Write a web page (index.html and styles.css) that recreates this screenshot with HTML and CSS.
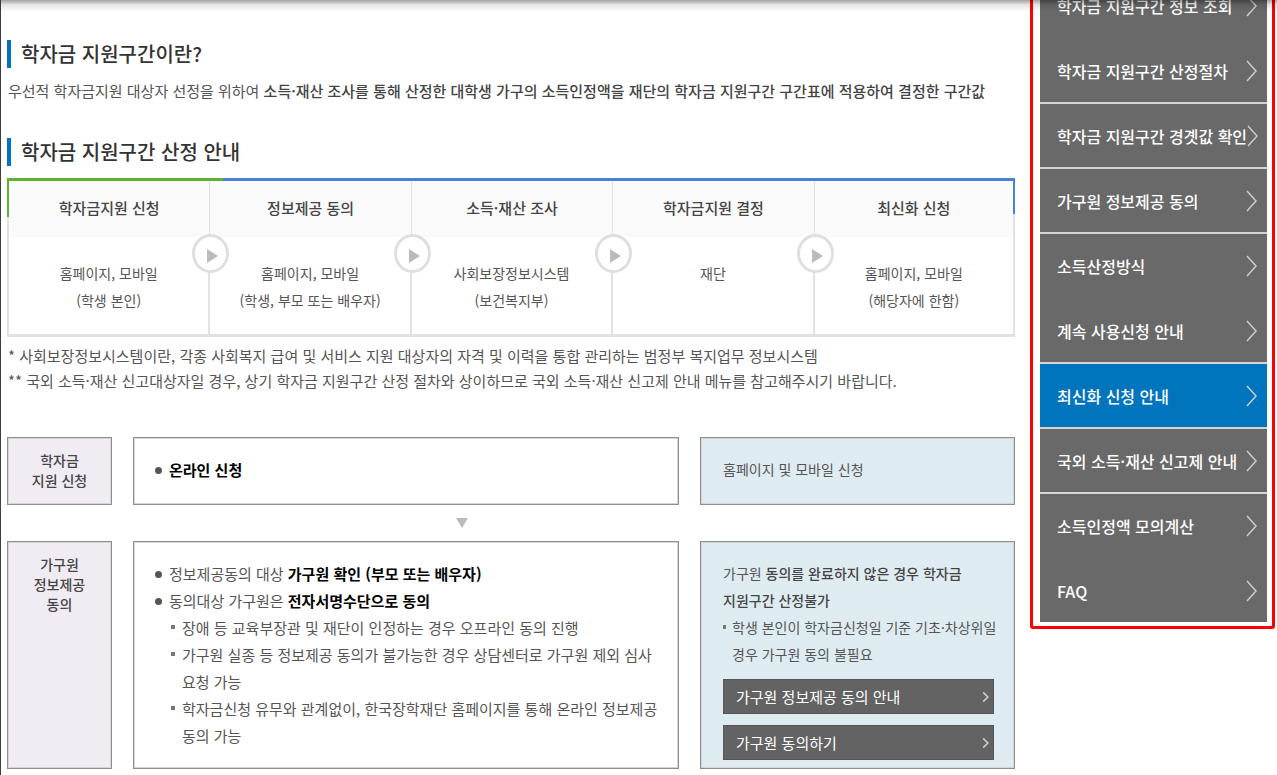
FILE: index.html
```html
<!DOCTYPE html>
<html lang="ko">
<head>
<meta charset="utf-8">
<title>학자금 지원구간 산정 안내</title>
<link rel="stylesheet" href="styles.css">
</head>
<body>
<div class="page">
  <div class="top-shadow"></div>
  <main class="content">
    <section class="intro">
      <h2 class="heading">학자금 지원구간이란?</h2>
      <p class="lead">우선적 학자금지원 대상자 선정을 위하여 <strong>소득·재산 조사를 통해 산정한 대학생 가구의 소득인정액을 재단의 학자금 지원구간 구간표에 적용하여 결정한 구간값</strong></p>
    </section>
    <section class="guide">
      <h2 class="heading">학자금 지원구간 산정 안내</h2>
      <ol class="steps">
        <li class="step"><h3 class="step-title">학자금지원 신청</h3><p class="step-body">홈페이지, 모바일<br>(학생 본인)</p><span class="arrow"><svg viewBox="0 0 11 14"><path d="M0 0L11 7L0 14Z"/></svg></span></li>
        <li class="step"><h3 class="step-title">정보제공 동의</h3><p class="step-body">홈페이지, 모바일<br>(학생, 부모 또는 배우자)</p><span class="arrow"><svg viewBox="0 0 11 14"><path d="M0 0L11 7L0 14Z"/></svg></span></li>
        <li class="step"><h3 class="step-title">소득·재산 조사</h3><p class="step-body">사회보장정보시스템<br>(보건복지부)</p><span class="arrow"><svg viewBox="0 0 11 14"><path d="M0 0L11 7L0 14Z"/></svg></span></li>
        <li class="step"><h3 class="step-title">학자금지원 결정</h3><p class="step-body">재단</p><span class="arrow"><svg viewBox="0 0 11 14"><path d="M0 0L11 7L0 14Z"/></svg></span></li>
        <li class="step"><h3 class="step-title">최신화 신청</h3><p class="step-body">홈페이지, 모바일<br>(해당자에 한함)</p></li>
      </ol>
      <p class="note">* 사회보장정보시스템이란, 각종 사회복지 급여 및 서비스 지원 대상자의 자격 및 이력을 통합 관리하는 범정부 복지업무 정보시스템</p>
      <p class="note">** 국외 소득·재산 신고대상자일 경우, 상기 학자금 지원구간 산정 절차와 상이하므로 국외 소득·재산 신고제 안내 메뉴를 참고해주시기 바랍니다.</p>
    </section>
    <section class="process">
      <div class="row">
        <h3 class="box label">학자금<br>지원 신청</h3>
        <div class="box detail">
          <ul class="dots"><li><b>온라인 신청</b></li></ul>
        </div>
        <div class="box side"><p>홈페이지 및 모바일 신청</p></div>
      </div>
      <div class="row down"><svg viewBox="0 0 12 10"><path d="M0 0H12L6 10Z"/></svg></div>
      <div class="row">
        <h3 class="box label">가구원<br>정보제공<br>동의</h3>
        <div class="box detail">
          <ul class="dots">
            <li>정보제공동의 대상 <b>가구원 확인 (부모 또는 배우자)</b></li>
            <li>동의대상 가구원은 <b>전자서명수단으로 동의</b>
              <ul class="squares">
                <li>장애 등 교육부장관 및 재단이 인정하는 경우 오프라인 동의 진행</li>
                <li>가구원 실종 등 정보제공 동의가 불가능한 경우 상담센터로 가구원 제외 심사 요청 가능</li>
                <li>학자금신청 유무와 관계없이, 한국장학재단 홈페이지를 통해 온라인 정보제공 동의 가능</li>
              </ul>
            </li>
          </ul>
        </div>
        <div class="box side">
          <p>가구원 <strong>동의를 완료하지 않은 경우 학자금<br>지원구간 산정불가</strong></p>
          <ul class="squares tight"><li>학생 본인이 학자금신청일 기준 기초·차상위일 경우 가구원 동의 불필요</li></ul>
          <a class="action" href="#">가구원 정보제공 동의 안내<svg viewBox="0 0 6 10"><path d="M1 1L5 5L1 9"/></svg></a>
          <a class="action" href="#">가구원 동의하기<svg viewBox="0 0 6 10"><path d="M1 1L5 5L1 9"/></svg></a>
        </div>
      </div>
    </section>
  </main>
  <nav class="menu">
    <a href="#">학자금 지원구간 정보 조회<svg viewBox="0 0 12 22"><path d="M1 1L10 11L1 21"/></svg></a>
    <a class="joined" href="#">학자금 지원구간 산정절차<svg viewBox="0 0 12 22"><path d="M1 1L10 11L1 21"/></svg></a>
    <a href="#">학자금 지원구간 경곗값 확인<svg viewBox="0 0 12 22"><path d="M1 1L10 11L1 21"/></svg></a>
    <a href="#">가구원 정보제공 동의<svg viewBox="0 0 12 22"><path d="M1 1L10 11L1 21"/></svg></a>
    <a href="#">소득산정방식<svg viewBox="0 0 12 22"><path d="M1 1L10 11L1 21"/></svg></a>
    <a class="joined" href="#">계속 사용신청 안내<svg viewBox="0 0 12 22"><path d="M1 1L10 11L1 21"/></svg></a>
    <a class="current" href="#">최신화 신청 안내<svg viewBox="0 0 12 22"><path d="M1 1L10 11L1 21"/></svg></a>
    <a href="#">국외 소득·재산 신고제 안내<svg viewBox="0 0 12 22"><path d="M1 1L10 11L1 21"/></svg></a>
    <a href="#">소득인정액 모의계산<svg viewBox="0 0 12 22"><path d="M1 1L10 11L1 21"/></svg></a>
    <a class="joined" href="#">FAQ<svg viewBox="0 0 12 22"><path d="M1 1L10 11L1 21"/></svg></a>
  </nav>
</div>
</body>
</html>
```

FILE: styles.css
```css
* { box-sizing: border-box; }
body, h2, h3, p, ul, ol { margin: 0; padding: 0; }
ul, ol { list-style: none; }
html, body { height: 100%; }
body {
  overflow: hidden;
  background: #fff;
  color: #555;
  font: 15px/24px "Noto Sans CJK KR", sans-serif;
  word-break: keep-all;
}
a { color: inherit; text-decoration: none; }
strong { font-weight: 500; color: #444; }

.page {
  position: relative;
  display: flex;
  gap: 15px;
  align-items: flex-start;
  min-height: 100%;
  padding: 0 2px 0 6px;
  border-left: 1px solid #3a3d42;
}
.top-shadow {
  position: absolute;
  inset: 0 0 auto 0;
  height: 12px;
  background: linear-gradient(rgba(0, 0, 0, .36), rgba(0, 0, 0, .1) 40%, rgba(0, 0, 0, 0));
  z-index: 1;
}

.content { flex: 1; min-width: 0; padding-top: 40px; }
.heading {
  padding-left: 10px;
  border-left: 4px solid #0074bc;
  color: #333;
  font-size: 20px;
  font-weight: 500;
  line-height: 28px;
}
.lead { padding: 11px 0 0 1px; }
.guide { padding-top: 35px; }

.steps {
  position: relative;
  display: grid;
  grid-template-columns: repeat(4, minmax(0, 66fr)) minmax(0, 65fr);
  margin: 12px 0 6px;
  border: solid #e2e2e2;
  border-width: 3px 2px;
  border-top-color: #4a80d8;
}
.steps::before, .steps::after {
  content: "";
  position: absolute;
  top: -3px;
  height: 36px;
}
.steps::before {
  left: -2px;
  width: 214px;
  border: solid #5eb131;
  border-width: 3px 0 0 2px;
  clip-path: polygon(0 0, 100% 0, 100% 3px, 2px 3px, 2px 100%, 0 100%);
}
.steps::after { right: -2px; width: 2px; background: #4a80d8; }
.step { position: relative; text-align: center; }
.step-title {
  padding: 15px 0 17px;
  border-right: 1px solid #e2e2e2;
  background: #fafafa;
  color: #444;
  font-size: 15px;
  font-weight: 500;
}
.step-body {
  min-height: 97px;
  padding-top: 23px;
  border-right: 2px solid #e2e2e2;
  font-size: 14px;
  line-height: 27px;
}
.step:last-child > * { border-right: 0; }
.arrow {
  position: absolute;
  top: 53px;
  right: -19px;
  z-index: 1;
  display: grid;
  place-items: center;
  width: 37px;
  height: 39px;
  padding: 4px 0 0 4px;
  border: 3px solid #dfdfdf;
  border-radius: 50%;
  background: #fff;
}
.arrow svg { width: 11px; height: 14px; fill: #bbb; }
.note { padding-left: 1px; line-height: 25px; }

.process { padding-top: 44px; }
.row {
  display: grid;
  grid-template-columns: 105px minmax(0, 1fr) 315px;
  gap: 21px;
}
.down { height: 36px; align-items: center; }
.down svg { grid-column: 2; justify-self: center; width: 12px; height: 10px; margin-right: -112px; fill: #bbb; }
.box { border: 1px solid #8e8e8e; outline: 1px solid #d5d5d5; outline-offset: -2px; line-height: 27px; }
.label {
  padding: 12px 0 14px;
  background: #f1ecf3;
  color: #444;
  text-align: center;
  font-size: 14px;
  font-weight: 500;
  line-height: 20px;
}
.detail { padding: 18px 20px; }
.side { padding: 18px 8px 8px 22px; background: #deecf2; font-size: 14px; }
.dots > li { position: relative; padding-left: 15px; }
.dots > li::before {
  content: "";
  position: absolute;
  left: 1px;
  top: 11px;
  width: 7px;
  height: 7px;
  border-radius: 50%;
  background: #555;
}
.dots b { color: #000; font-weight: 700; }
.squares > li { position: relative; padding-left: 13px; }
.squares > li::before {
  content: "";
  position: absolute;
  left: 2px;
  top: 11px;
  width: 4px;
  height: 4px;
  background: #777;
}
.tight > li { padding-left: 9px; }
.tight > li::before { left: 0; width: 3px; }
.action {
  display: flex;
  align-items: center;
  justify-content: space-between;
  height: 35px;
  margin: 11px 12px 0 0;
  padding: 0 4px 0 12px;
  border: 1px solid #555;
  background: #636363;
  color: #fff;
  font-size: 15px;
}
.action svg { width: 7px; height: 12px; fill: none; stroke: #ccc; stroke-width: 1.4; }

.menu {
  flex: none;
  width: 245px;
  margin-top: -38px;
  padding: 7px 5px 4px 7px;
  border: 3px solid #f00;
  border-radius: 3px;
}
.menu a {
  display: flex;
  align-items: center;
  height: 65px;
  padding-left: 17px;
  border-top: 2px solid #d5d5d5;
  background: #696969;
  color: #fff;
  font-size: 16px;
  font-weight: 500;
  white-space: nowrap;
}
.menu .joined { border-top-color: #696969; }
.menu .current { background: #0074bc; }
.menu svg { flex: none; width: 12px; height: 22px; margin: 0 9px 0 auto; fill: none; stroke: #ccc; stroke-width: 1.5; }
```
